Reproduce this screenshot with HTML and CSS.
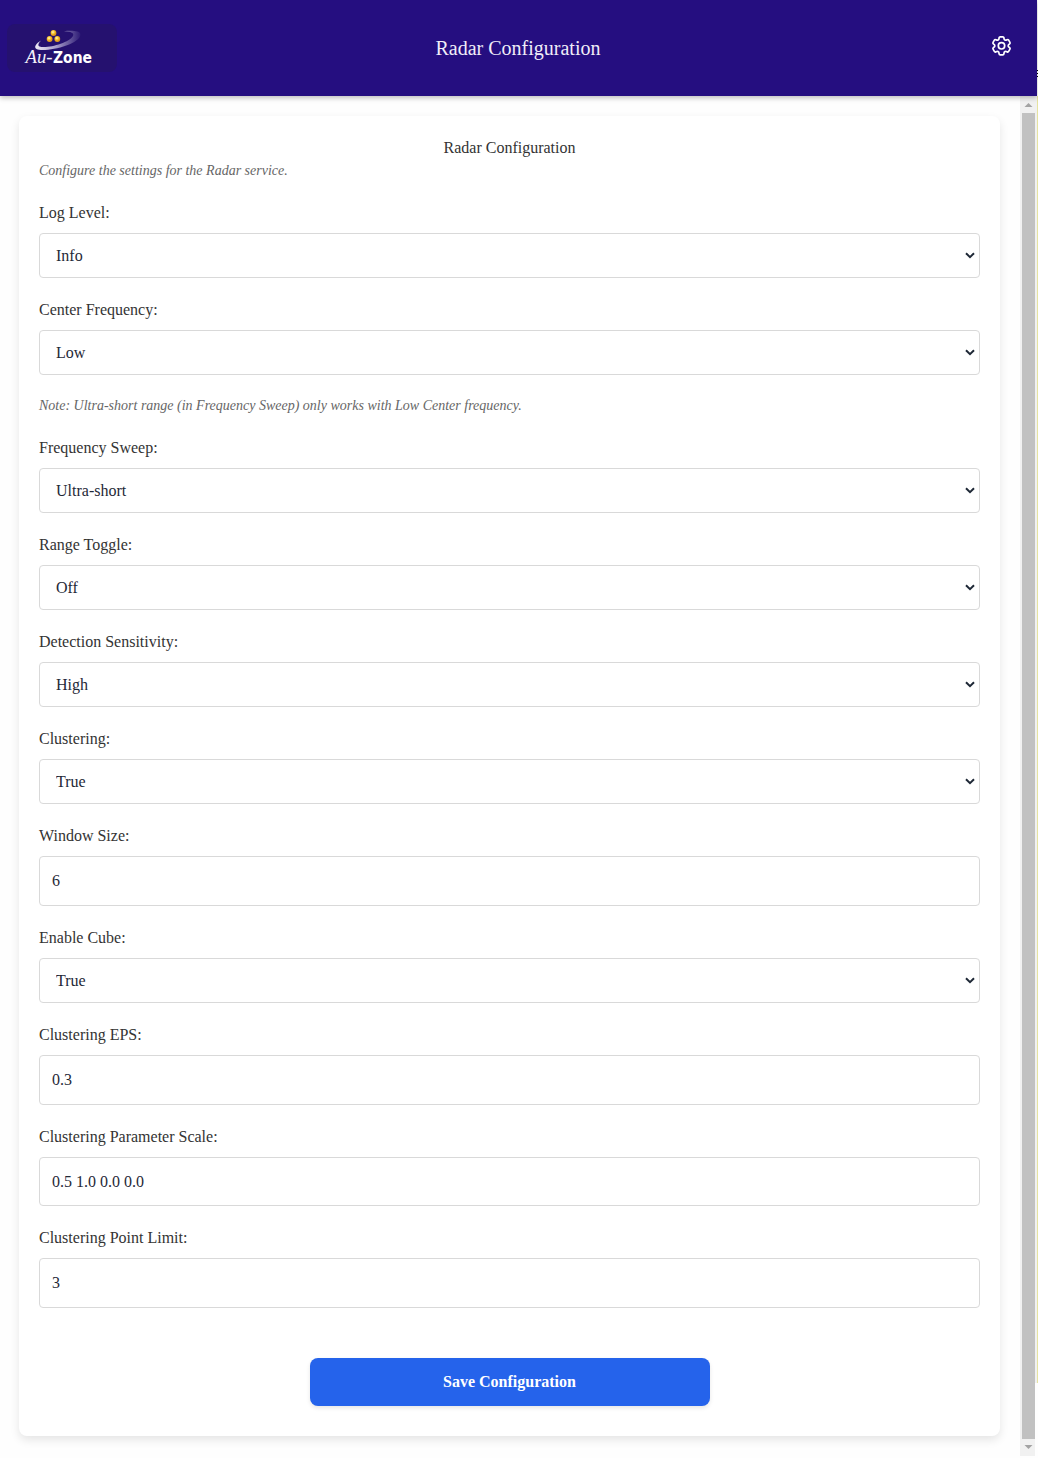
FILE: index.html
```html
<!DOCTYPE html>
<html lang="en">
<head>
<meta charset="utf-8">
<title>Radar Configuration</title>
<link rel="stylesheet" href="styles.css">
</head>
<body>
<div class="app">
  <header class="header">
    <svg class="logo" width="110" height="48" viewBox="7 24 110 48">
      <defs>
        <linearGradient id="swoosh" x1="0" x2="1">
          <stop offset="0" stop-color="#eeeaf6"/>
          <stop offset=".45" stop-color="#aaa0cb"/>
          <stop offset="1" stop-color="#2d1b76"/>
        </linearGradient>
        <radialGradient id="gold" cx=".4" cy=".35">
          <stop offset="0" stop-color="#fff8c8"/>
          <stop offset=".5" stop-color="#fbcf3c"/>
          <stop offset="1" stop-color="#e09a1c"/>
        </radialGradient>
      </defs>
      <rect x="7" y="24" width="110" height="48" rx="8" fill="#25116f"/>
      <path d="M41 40.500C36 43.500 33.500 47 36.500 49C44 53 80 45 80.500 34.500C80.500 30.500 71 30.500 64 31.200C71 31.500 74.500 33 73 36C69 43 47 49 39.500 46.500C37.500 45.500 38.500 43 41 40.500Z" fill="url(#swoosh)"/>
      <g fill="url(#gold)"><circle cx="53.500" cy="33" r="2.900"/><circle cx="49.600" cy="39" r="2.900"/><circle cx="57.300" cy="39" r="2.900"/></g>
      <text class="logo-au" x="25.500" y="63" textLength="27" lengthAdjust="spacingAndGlyphs">Au-</text>
      <text class="logo-zone" x="53" y="63" textLength="39" lengthAdjust="spacingAndGlyphs">Zone</text>
    </svg>
    <h1 class="title">Radar Configuration</h1>
    <svg class="gear" width="24" height="24" viewBox="-0.5 0.2 24 24" fill="none" stroke="#fff" stroke-width="1.7" stroke-linecap="round" stroke-linejoin="round">
      <path d="M9.594 3.940c.09-.542.56-.94 1.110-.94h2.593c.55 0 1.020.398 1.110.94l.213 1.281c.063.374.313.686.645.87.074.04.147.083.22.127.325.196.72.257 1.075.124l1.217-.456a1.125 1.125 0 0 1 1.370.49l1.296 2.247a1.125 1.125 0 0 1-.26 1.431l-1.003.827c-.293.241-.438.613-.43.992a7.723 7.723 0 0 1 0 .255c-.008.378.137.75.43.991l1.004.827c.424.35.534.955.26 1.430l-1.298 2.247a1.125 1.125 0 0 1-1.369.491l-1.217-.456c-.355-.133-.75-.072-1.076.124a6.470 6.470 0 0 1-.22.128c-.331.183-.581.495-.644.869l-.213 1.281c-.09.543-.56.940-1.110.940h-2.594c-.55 0-1.019-.398-1.110-.940l-.213-1.281c-.062-.374-.312-.686-.644-.870a6.520 6.520 0 0 1-.22-.127c-.325-.196-.72-.257-1.076-.124l-1.217.456a1.125 1.125 0 0 1-1.369-.490l-1.297-2.247a1.125 1.125 0 0 1 .26-1.431l1.004-.827c.292-.240.437-.613.430-.991a6.932 6.932 0 0 1 0-.255c.007-.380-.138-.751-.430-.992l-1.004-.827a1.125 1.125 0 0 1-.26-1.430l1.297-2.247a1.125 1.125 0 0 1 1.370-.491l1.216.456c.356.133.751.072 1.076-.124.072-.044.146-.086.220-.128.332-.183.582-.495.644-.869l.214-1.280Z"/>
      <circle cx="12" cy="12" r="3.200"/>
    </svg>
  </header>
  <div class="body">
    <main class="content">
      <form class="card">
        <h2 class="heading">Radar Configuration</h2>
        <p class="hint">Configure the settings for the Radar service.</p>
        <div class="field"><label>Log Level:</label><select><option>Info</option></select></div>
        <div class="field"><label>Center Frequency:</label><select><option>Low</option></select></div>
        <p class="hint">Note: Ultra-short range (in Frequency Sweep) only works with Low Center frequency.</p>
        <div class="field"><label>Frequency Sweep:</label><select><option>Ultra-short</option></select></div>
        <div class="field"><label>Range Toggle:</label><select><option>Off</option></select></div>
        <div class="field"><label>Detection Sensitivity:</label><select><option>High</option></select></div>
        <div class="field"><label>Clustering:</label><select><option>True</option></select></div>
        <div class="field"><label>Window Size:</label><input type="text" value="6"></div>
        <div class="field"><label>Enable Cube:</label><select><option>True</option></select></div>
        <div class="field"><label>Clustering EPS:</label><input type="text" value="0.3"></div>
        <div class="field"><label>Clustering Parameter Scale:</label><input class="short" type="text" value="0.5 1.0 0.0 0.0"></div>
        <div class="field"><label>Clustering Point Limit:</label><input type="text" value="3"></div>
        <button class="save" type="button">Save Configuration</button>
      </form>
    </main>
    <div class="scrollbar">
      <svg width="15" height="17"><path d="M4.500 11L8.500 7L12.500 11Z" fill="#a3a3a3"/></svg>
      <div class="thumb"></div>
      <svg width="15" height="17"><path d="M4.500 6L8.500 10L12.500 6Z" fill="#a3a3a3"/></svg>
    </div>
    <div class="gutter"></div>
  </div>
</div>
<div class="edge"><i></i><i></i><i></i></div>
</body>
</html>
```
FILE: styles.css
```css
* { box-sizing: border-box; }
body {
  margin: 0;
  height: 1458px;
  display: grid;
  grid-template-columns: 1037px 1px;
  overflow: hidden;
  background: #fefefe;
  color: #333;
  font: 16px/24px "Liberation Serif", "Times New Roman", serif;
}
.app { display: flex; flex-direction: column; }
.header {
  height: 96px;
  display: grid;
  grid-template-columns: 110px 1fr 110px;
  align-items: center;
  padding: 0 8px 0 7px;
  background: #250e80;
  box-shadow: 0 2px 5px rgba(0, 0, 0, .25);
  position: relative;
  z-index: 1;
}
.logo-au { font: italic 19px "Liberation Serif", serif; fill: #f3f1fa; }
.logo-zone { font: bold 15px "DejaVu Sans", sans-serif; fill: #fff; }
.title { margin: 0; font-size: 20px; font-weight: 400; line-height: 28px; color: #f0edf8; text-align: center; }
.gear { justify-self: end; margin: 0 16px 5px 0; }
.body { flex: 1; display: grid; grid-template-columns: 1020px 15px 2px; }
.content { padding: 20px 20px 22px 19px; }
.card {
  height: 1320px;
  padding: 20px;
  border-radius: 8px;
  background: #fff;
  box-shadow: 0 4px 10px rgba(0, 0, 0, .1);
}
.heading { margin: 0; font-size: 16px; font-weight: 400; text-align: center; }
.hint { margin: 0 0 20px; font-size: 14px; line-height: 21px; font-style: italic; color: #666; }
.field { display: flex; flex-direction: column; gap: 8px; margin-bottom: 20px; }
select, input {
  width: 100%;
  height: 45px;
  padding: 12px;
  border: 1px solid #d9d9d9;
  border-radius: 4px;
  background: #fff;
  color: #1f2937;
  font: inherit;
  line-height: 20px;
}
select {
  appearance: none;
  padding-left: 16px;
  background: #fff url("data:image/svg+xml,%3Csvg xmlns='http://www.w3.org/2000/svg' width='10' height='7'%3E%3Cpath d='M1 1.200L5 5.200L9 1.200' fill='none' stroke='%231f2937' stroke-width='2'/%3E%3C/svg%3E") no-repeat right 4px top 18px;
}
input { height: 50px; }
.short { height: 49px; }
.save {
  display: block;
  width: 400px;
  height: 48px;
  margin: 50px auto 0;
  border: 0;
  border-radius: 8px;
  background: #2563eb;
  box-shadow: 0 2px 4px rgba(0, 0, 0, .1);
  color: #fff;
  font: bold 16px/24px "Liberation Serif", serif;
}
.scrollbar { height: 1360px; display: flex; flex-direction: column; background: #f1f1f1; }
.scrollbar svg { display: block; flex: none; }
.thumb { flex: 1; margin-left: 2px; background: #c1c1c1; }
.gutter { height: 1287px; background: #f1f1f1; }
.edge { height: 1383px; padding-top: 70px; background: linear-gradient(#fff 96px, #e6e3a0 96px); display: flex; flex-direction: column; gap: 2px; }
.edge i { height: 1px; background: #000; }
```
